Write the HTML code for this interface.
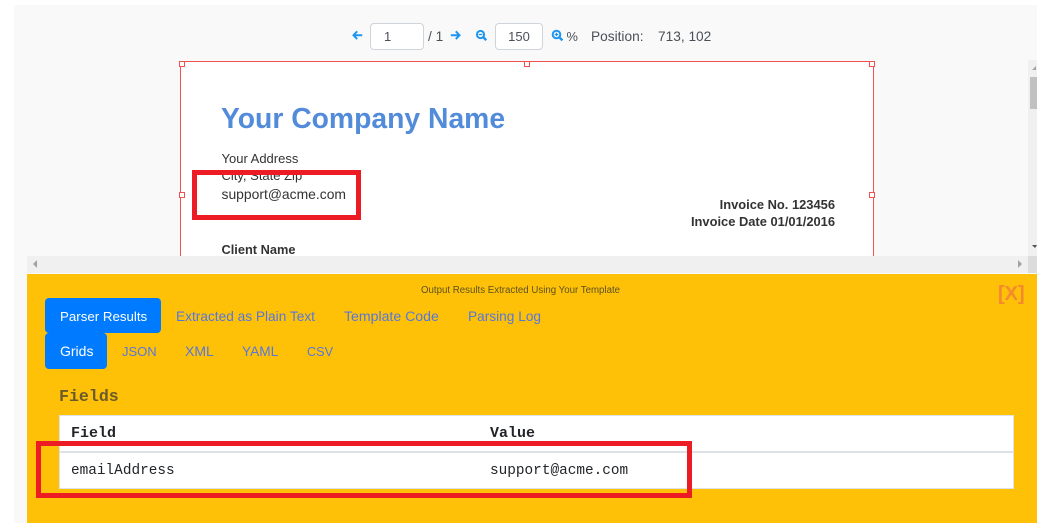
<!DOCTYPE html>
<html>
<head>
<meta charset="utf-8">
<style>
html,body{margin:0;padding:0;width:1037px;height:523px;overflow:hidden;background:#fff;}
body{position:relative;font-family:"Liberation Sans",sans-serif;}
.a{position:absolute;white-space:nowrap;}
.box{position:absolute;box-sizing:border-box;}
.h{position:absolute;width:6px;height:6px;box-sizing:border-box;border:1px solid #ef5350;background:#fff;}
.inp{position:absolute;box-sizing:border-box;background:#fff;border:1px solid #ced4da;border-radius:4px;height:27px;top:23px;font-size:13px;color:#495057;text-align:center;line-height:26px;}
.t{font-size:13.7px;color:#495057;line-height:20px;}
.doc{font-size:13px;color:#333;line-height:16px;}
.tab{font-size:13.7px;line-height:20px;color:#5577dd;}
.mono{font-family:"Liberation Mono",monospace;color:#212529;}
</style>
</head>
<body>
<div class="box" style="left:14px;top:5px;width:1023px;height:518px;background:#f9f9f9;"></div>

<svg class="a" style="left:352px;top:30px" width="11" height="11" viewBox="0 0 11 11"><path d="M5.2 1.3 1.5 5.2 5.2 9.1M1.8 5.2H10.2" fill="none" stroke="#1e96f0" stroke-width="2"/></svg>
<div class="inp" style="left:370px;width:54px;text-align:left;padding-left:13px;">1</div>
<div class="a t" style="left:428px;top:27px;">/ 1</div>
<svg class="a" style="left:450px;top:30px" width="11" height="11" viewBox="0 0 11 11"><path d="M5.8 1.3 9.5 5.2 5.8 9.1M9.2 5.2H.8" fill="none" stroke="#1e96f0" stroke-width="2"/></svg>
<svg class="a" style="left:475px;top:29px" width="12" height="12" viewBox="0 0 12 12"><circle cx="5.5" cy="5.5" r="3.6" fill="none" stroke="#1e96f0" stroke-width="2"/><path d="M8 8 11.2 11.2" stroke="#1e96f0" stroke-width="2.4"/><path d="M3.7 5.5H7.3" stroke="#1e96f0" stroke-width="1.3"/></svg>
<div class="inp" style="left:495px;width:48px;">150</div>
<svg class="a" style="left:551px;top:29px" width="12" height="12" viewBox="0 0 12 12"><circle cx="5.5" cy="5.5" r="3.8" fill="none" stroke="#1e96f0" stroke-width="2"/><path d="M8.2 8.2 11.4 11.4" stroke="#1e96f0" stroke-width="2.4"/><path d="M3.7 5.5H7.3M5.5 3.7V7.3" stroke="#1e96f0" stroke-width="1.3"/></svg>
<div class="a t" style="left:566.5px;top:27px;font-size:12.8px;">%</div>
<div class="a t" style="left:591px;top:27px;">Position:</div>
<div class="a t" style="left:658px;top:27px;">713, 102</div>

<!-- document -->
<div class="box" style="left:180px;top:61px;width:694px;height:195px;background:#fff;border:1px solid #ef5350;border-bottom:0;"></div>
<div class="h" style="left:179px;top:61px;"></div>
<div class="h" style="left:524px;top:61px;"></div>
<div class="h" style="left:869px;top:61px;"></div>
<div class="h" style="left:179px;top:192px;"></div>
<div class="h" style="left:869px;top:192px;"></div>

<div class="a" style="left:221px;top:102px;font-size:28.3px;line-height:32px;font-weight:bold;color:#528bd9;">Your Company Name</div>
<div class="a doc" style="left:221.5px;top:151px;">Your Address</div>
<div class="a doc" style="left:221.5px;top:168px;">City, State Zip</div>
<div class="a doc" style="left:221.5px;top:186px;font-size:13.9px;">support@acme.com</div>
<div class="a doc" style="right:202px;top:197px;font-weight:bold;font-size:12.9px;">Invoice No. 123456</div>
<div class="a doc" style="right:202px;top:214px;font-weight:bold;font-size:12.9px;">Invoice Date 01/01/2016</div>
<div class="a doc" style="left:221.5px;top:242px;font-weight:bold;font-size:12.8px;">Client Name</div>

<!-- red annotation 1 -->
<div class="box" style="left:192px;top:170px;width:169px;height:50px;border:5px solid #ed1c24;"></div>

<!-- scrollbars -->
<div class="box" style="left:1028px;top:60px;width:9px;height:196px;background:#f0f0f0;"></div>
<div class="box" style="left:1030px;top:77px;width:7px;height:32px;background:#c1c1c1;"></div>
<svg class="a" style="left:1032px;top:66px" width="5" height="5"><path d="M0 4 4 0V4Z" fill="#a3a3a3"/></svg>
<svg class="a" style="left:1032px;top:245px" width="5" height="5"><path d="M0 0H5L3 3Z" fill="#505050"/></svg>
<div class="box" style="left:27px;top:256px;width:1010px;height:17px;background:#f0f0f0;"></div>
<div class="box" style="left:1028px;top:256px;width:9px;height:17px;background:#dcdcdc;"></div>
<svg class="a" style="left:33px;top:260px" width="5" height="9"><path d="M4 0V8L0 4Z" fill="#a3a3a3"/></svg>
<svg class="a" style="left:1018px;top:260px" width="5" height="9"><path d="M0 0V8L4 4Z" fill="#a3a3a3"/></svg>

<!-- yellow panel -->
<div class="box" style="left:27px;top:274px;width:1010px;height:249px;background:#ffc107;"></div>
<div class="a" style="left:421px;top:285px;font-size:9.7px;line-height:12px;color:#5c5220;">Output Results Extracted Using Your Template</div>
<div class="a" style="left:998px;top:283px;font-size:20px;line-height:23px;font-weight:bold;color:#f5892f;">[X]</div>

<div class="box" style="left:45px;top:298px;width:116px;height:35px;background:#007bff;border-radius:4px;"></div>
<div class="a tab" style="left:60px;top:307px;color:#fff;font-size:13.3px;">Parser Results</div>
<div class="a tab" style="left:176px;top:307px;">Extracted as Plain Text</div>
<div class="a tab" style="left:344px;top:306px;font-size:14.1px;">Template Code</div>
<div class="a tab" style="left:468px;top:307px;">Parsing Log</div>

<div class="box" style="left:45px;top:333px;width:62px;height:36px;background:#007bff;border-radius:4px;"></div>
<div class="a tab" style="left:60px;top:341px;color:#fff;font-size:14px;">Grids</div>
<div class="a tab" style="left:122px;top:342px;font-size:13px;">JSON</div>
<div class="a tab" style="left:185px;top:341px;font-size:14px;">XML</div>
<div class="a tab" style="left:242px;top:342px;font-size:13.7px;">YAML</div>
<div class="a tab" style="left:307px;top:342px;font-size:12.7px;">CSV</div>

<div class="a mono" style="left:59px;top:387px;font-size:16.6px;line-height:20px;font-weight:bold;color:#6b5a2c;">Fields</div>

<div class="box" style="left:59px;top:415px;width:955px;height:74px;background:#fff;border:1px solid #dee2e6;"></div>
<div class="box" style="left:60px;top:451px;width:953px;height:2px;background:#dee2e6;"></div>
<div class="a mono" style="left:71px;top:425px;font-size:15px;line-height:18px;font-weight:bold;">Field</div>
<div class="a mono" style="left:490px;top:425px;font-size:15px;line-height:18px;font-weight:bold;">Value</div>
<div class="a mono" style="left:71px;top:462px;font-size:14.4px;line-height:18px;">emailAddress</div>
<div class="a mono" style="left:490px;top:462px;font-size:14.4px;line-height:18px;">support@acme.com</div>

<!-- red annotation 2 -->
<div class="box" style="left:36px;top:441px;width:656px;height:57px;border:5px solid #ed1c24;"></div>
</body>
</html>
